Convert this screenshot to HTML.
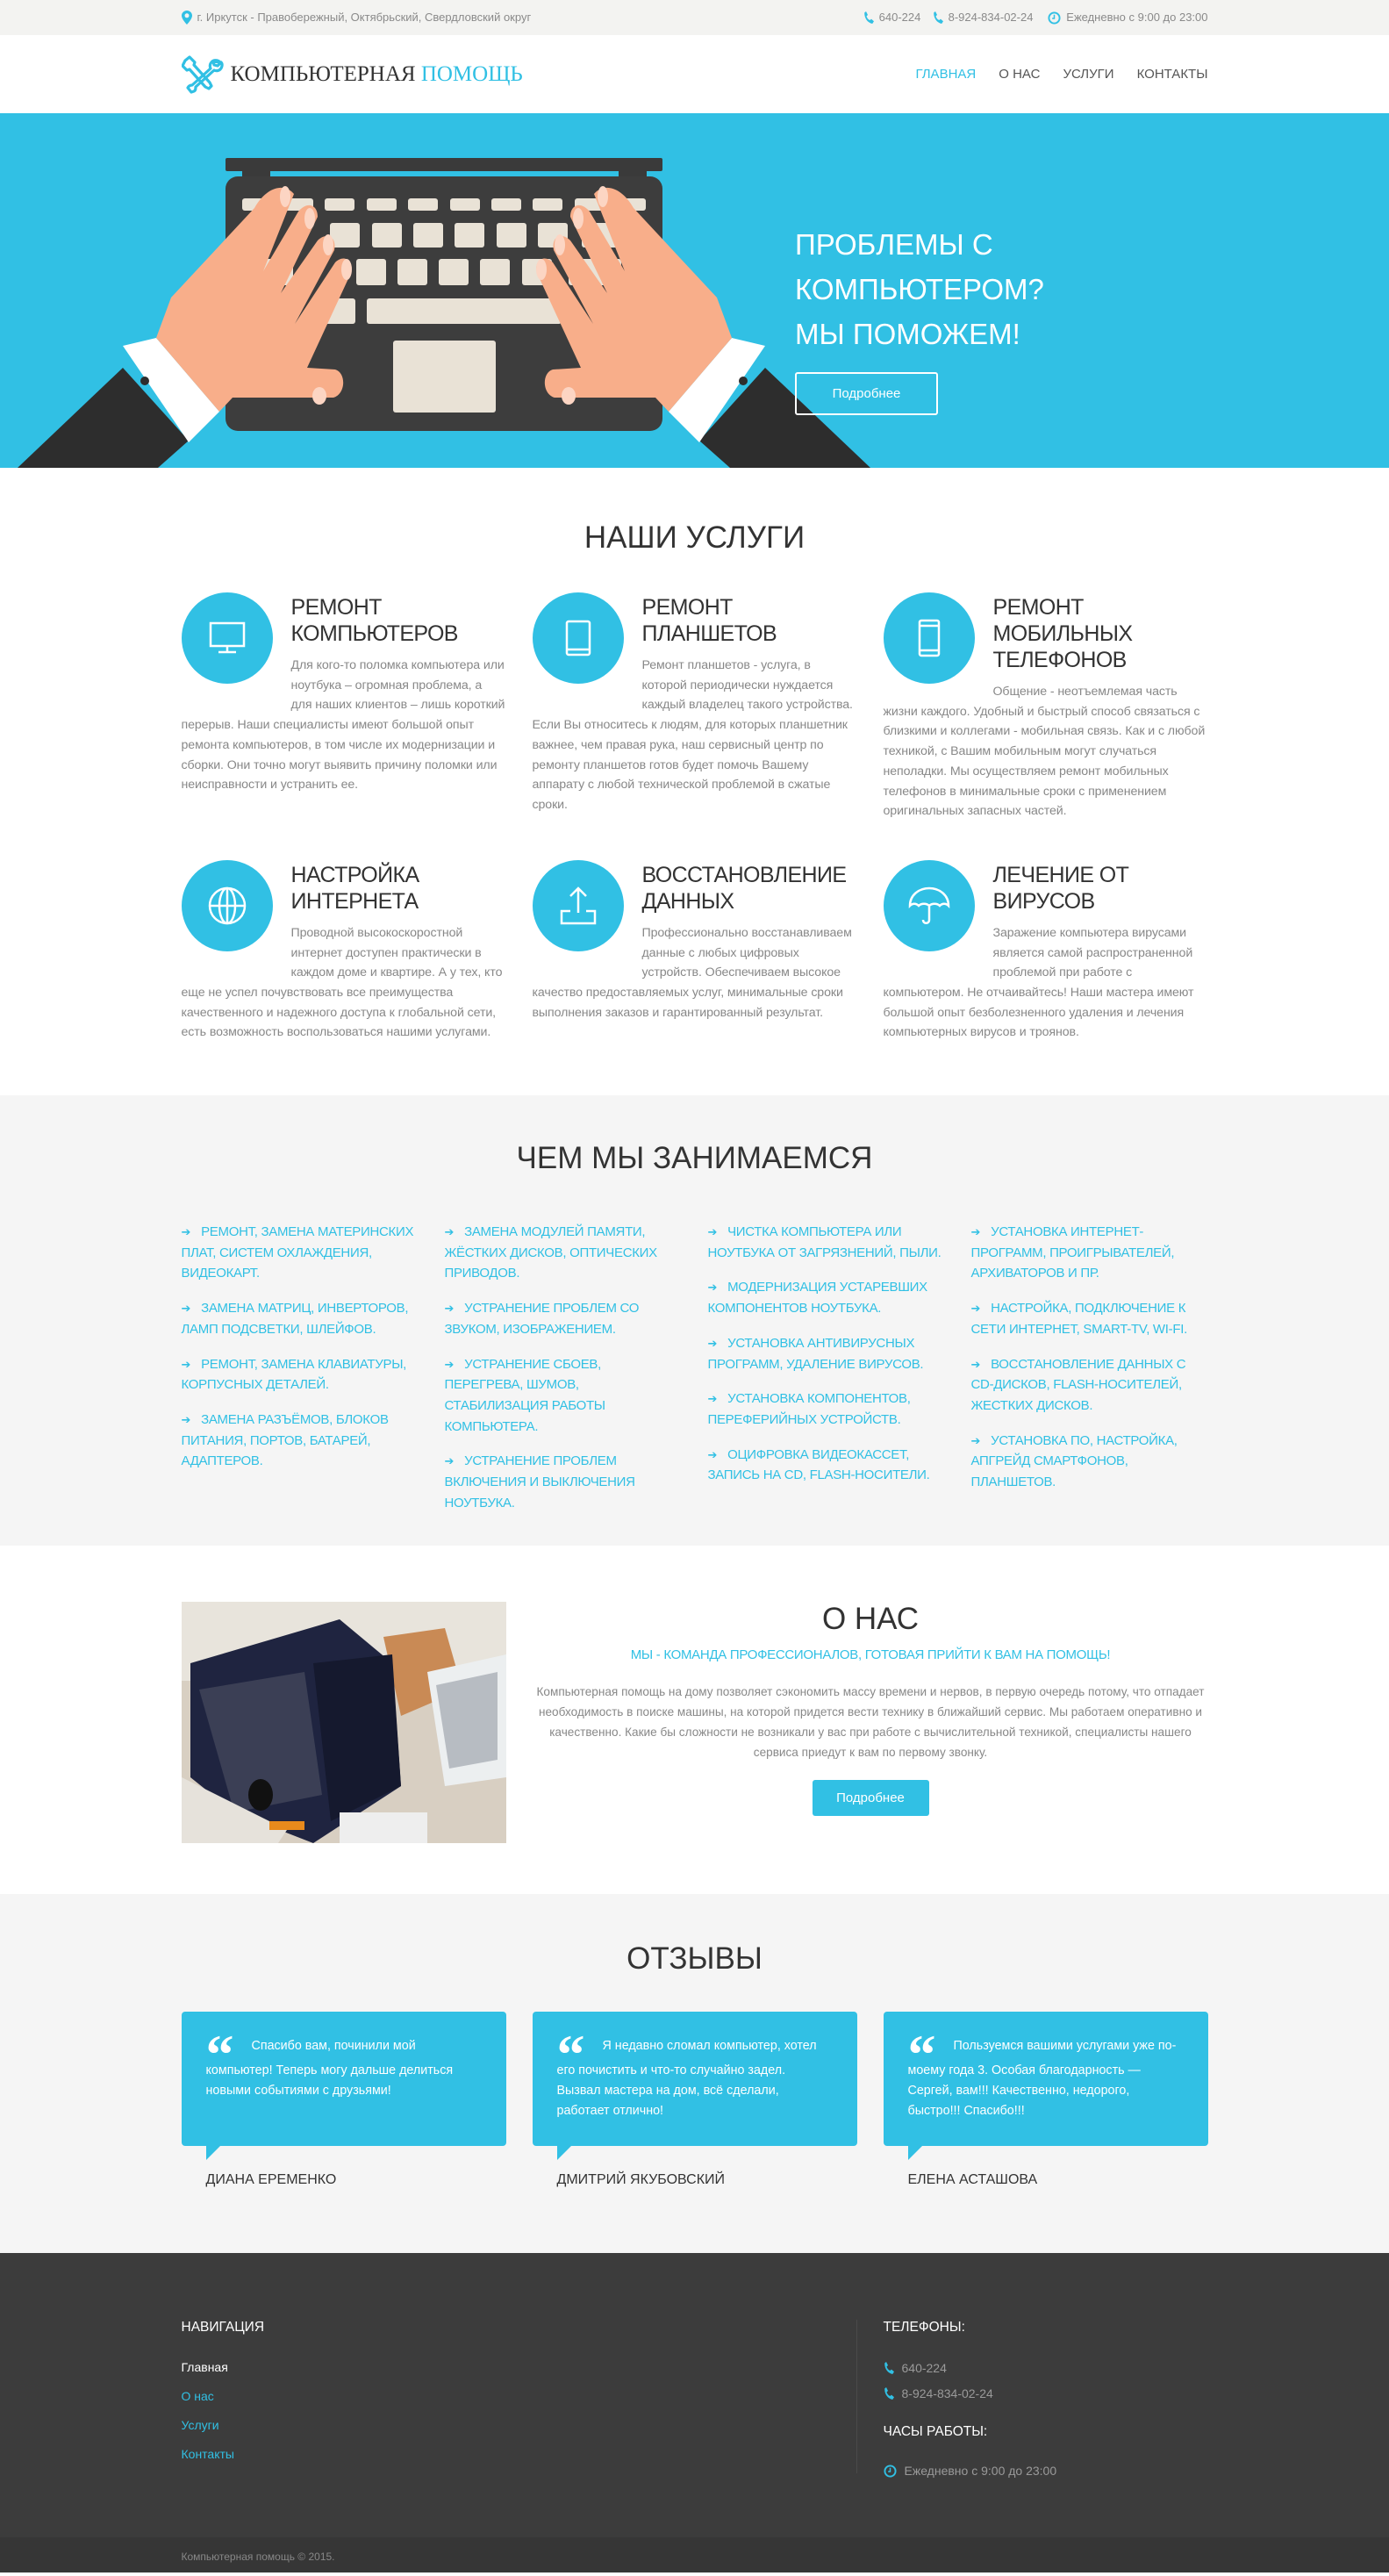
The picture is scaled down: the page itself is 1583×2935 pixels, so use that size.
<!DOCTYPE html>
<html><head><meta charset="utf-8"><style>
*{box-sizing:border-box;margin:0;padding:0}
body{width:1583px;font-family:"Liberation Sans","DejaVu Sans",sans-serif;color:#333;background:#fff}
.c{width:1200px;margin:0 auto;padding:0 15px;position:relative}
.top{height:40px;background:#f3f3f1;font-size:13px;color:#8a8a8a;line-height:40px}
.top .c{display:flex;justify-content:space-between}
.top span{display:inline-flex;align-items:center;gap:6px}
.hdr{height:89px;background:#fff}
.hdr .c{display:flex;justify-content:space-between;align-items:center;height:89px}
.logo{display:flex;align-items:center;font-family:"Liberation Serif",serif;font-size:25px;color:#333;gap:8px}
.logo b{font-weight:normal;color:#31c0e4}
.nav a{font-size:15px;color:#555;text-decoration:none;margin-left:26px;text-transform:uppercase}
.nav a:first-child{color:#31c0e4}
.hero{height:404px;background:#31c0e4;position:relative;overflow:hidden}
.hero h1{position:absolute;left:906px;top:124px;font-weight:normal;color:#fff;font-size:33px;line-height:51px}
.hero .btn{position:absolute;left:906px;top:295px;width:163px;height:49px;border:2px solid #fff;border-radius:3px;color:#fff;font-size:15px;line-height:45px;text-align:center}
.h2{text-align:center;font-size:35px;font-weight:normal;color:#333}
.svc{height:715px;padding-top:60px;overflow:hidden}
.row{display:flex;margin:0 -15px}
.col3{width:400px;padding:0 15px}
.item .ic{float:left;width:104px;height:104px;border-radius:50%;background:#31c0e4;margin:0 21px 20px 0;display:flex;align-items:center;justify-content:center}
.item h3{font-weight:normal;font-size:25px;letter-spacing:-0.6px;line-height:30px;text-transform:uppercase;color:#333;padding-top:2px;margin-bottom:10px;white-space:nowrap}
.item p{font-size:14.2px;letter-spacing:-0.1px;line-height:22.7px;color:#888}
.gray{background:#f5f5f5}
.what{height:513px;padding-top:52px;overflow:hidden}
.list{display:flex;margin:52px -15px 0}
.list .col{width:300px;padding:0 15px}
.list p{color:#31c0e4;font-size:15px;letter-spacing:-0.3px;line-height:23.7px;text-transform:uppercase;margin-bottom:16px}
.list p:before{content:"\2794";margin-right:12px;font-size:13px}
.about{height:397px;padding-top:71px}
.about .img{width:370px;height:275px;float:left;position:relative;overflow:hidden;background:#c9b49a}
.about .txt{margin-left:401px;text-align:center}
.about .txt h2{font-weight:normal;font-size:35px;line-height:40px;margin-top:-7px}
.about .sub{color:#31c0e4;font-size:15px;letter-spacing:-0.3px;text-transform:uppercase;margin-top:12px}
.about .p{color:#888;font-size:13.6px;line-height:23px;margin-top:22px;padding:0 0}
.about .b2{display:inline-block;width:133px;height:41px;line-height:41px;background:#31c0e4;color:#fff;border-radius:3px;font-size:15px;margin-top:20px}
.rev{height:409px;padding-top:54px}
.cards{display:flex;margin:40px -15px 0}
.card{width:400px;padding:0 15px}
.bub{background:#31c0e4;border-radius:4px;height:153px;padding:28px 28px;position:relative;color:#fff;font-size:14.3px;line-height:23px}
.bub:after{content:"";position:absolute;left:28px;bottom:-16px;border-right:16px solid transparent;border-top:16px solid #31c0e4}
.q{display:inline-block;font-family:"Liberation Serif",serif;font-size:64px;line-height:30px;height:28px;vertical-align:top;margin-right:20px;font-weight:bold;position:relative;top:6px}
.name{margin:30px 0 0 28px;font-size:16px;text-transform:uppercase;color:#333}
.foot{background:#3c3c3c;height:324px;padding-top:76px}
.foot .c{display:flex}
.fl{width:770px;border-right:1px solid #4a4a4a;height:175px}
.fr{padding-left:30px}
.foot h4{font-weight:normal;color:#fff;font-size:15.5px;text-transform:uppercase}
.fl a{display:block;font-size:14px;color:#31c0e4;text-decoration:none;margin-top:15px;line-height:18px}
.fl a.w{color:#fff;margin-top:27px}
.fr div{color:#9a9a9a;font-size:14px;display:flex;align-items:center;gap:9px;line-height:18px}
.copy{background:#363636;height:40px;color:#888;font-size:12px;line-height:44px}
</style></head><body>
<div class="top"><div class="c">
<span><svg width="12" height="16" viewBox="0 0 12 16"><path d="M6 0C2.7 0 0 2.6 0 5.8 0 10 6 16 6 16s6-6 6-10.2C12 2.6 9.3 0 6 0zm0 8.3A2.5 2.5 0 1 1 6 3.3a2.5 2.5 0 0 1 0 5z" fill="#31c0e4"/></svg>г. Иркутск - Правобережный, Октябрьский, Свердловский округ</span>
<span><svg width="12" height="15" viewBox="0 0 12 15"><path d="M3 0l2 4-1.5 1.5c.6 2 2 3.7 3.8 4.5L9 8.6l3 2.6-1.8 2.8C5 13 1 8 1.2 1.5z" fill="#31c0e4"/></svg>640-224 &nbsp;<svg width="12" height="15" viewBox="0 0 12 15"><path d="M3 0l2 4-1.5 1.5c.6 2 2 3.7 3.8 4.5L9 8.6l3 2.6-1.8 2.8C5 13 1 8 1.2 1.5z" fill="#31c0e4"/></svg>8-924-834-02-24 &nbsp;&nbsp;<svg width="15" height="15" viewBox="0 0 16 16"><circle cx="8" cy="8" r="6.5" fill="none" stroke="#31c0e4" stroke-width="2"/><path d="M8 4v4.5h-2.5" fill="none" stroke="#31c0e4" stroke-width="1.6"/></svg>Ежедневно с 9:00 до 23:00</span>
</div></div>
<div class="hdr"><div class="c">
<div class="logo"><svg width="48" height="44" viewBox="0 0 48 44" fill="none" stroke="#31c0e4" stroke-width="3.2" stroke-linejoin="round"><path d="M4 6l5-4 6 6-1 3 18 20 2 4-3 3-4-2L9 16l-3 1-5-5z"/><path d="M44 8c-3-3-8-3-10 0-2 2-2 5-1 7L12 34c-2 0-4 1-5 3l4 5 3-1c2-1 2-3 2-5l21-19c2 1 5 1 7-1 2-2 3-6 1-8l-4 4-4-1-1-4z"/></svg><span>КОМПЬЮТЕРНАЯ <b>ПОМОЩЬ</b></span></div>
<div class="nav"><a>Главная</a><a>О нас</a><a>Услуги</a><a>Контакты</a></div>
</div></div>
<div class="hero">
<svg width="1583" height="404" style="position:absolute;left:0;top:0">
<rect x="257" y="51" width="498" height="15" rx="2" fill="#3a3a3a"/>
<rect x="276" y="64" width="32" height="14" fill="#3a3a3a"/><rect x="705" y="64" width="32" height="14" fill="#3a3a3a"/>
<rect x="257" y="72" width="498" height="290" rx="14" fill="#3d3d3d"/>
<g fill="#e9e2d6">
<rect x="276" y="97" width="34" height="14" rx="3"/><rect x="323" y="97" width="34" height="14" rx="3"/><rect x="370" y="97" width="34" height="14" rx="3"/><rect x="418" y="97" width="34" height="14" rx="3"/><rect x="465" y="97" width="34" height="14" rx="3"/><rect x="513" y="97" width="34" height="14" rx="3"/><rect x="560" y="97" width="34" height="14" rx="3"/><rect x="607" y="97" width="34" height="14" rx="3"/><rect x="655" y="97" width="34" height="14" rx="3"/><rect x="702" y="97" width="34" height="14" rx="3"/>
<rect x="276" y="125" width="34" height="28" rx="3"/><rect x="376" y="125" width="34" height="28" rx="3"/><rect x="424" y="125" width="34" height="28" rx="3"/><rect x="471" y="125" width="34" height="28" rx="3"/><rect x="518" y="125" width="34" height="28" rx="3"/><rect x="566" y="125" width="34" height="28" rx="3"/><rect x="613" y="125" width="34" height="28" rx="3"/><rect x="663" y="125" width="73" height="28" rx="3"/>
<rect x="300" y="166" width="34" height="30" rx="3"/><rect x="406" y="166" width="34" height="30" rx="3"/><rect x="453" y="166" width="34" height="30" rx="3"/><rect x="500" y="166" width="34" height="30" rx="3"/><rect x="547" y="166" width="34" height="30" rx="3"/><rect x="595" y="166" width="34" height="30" rx="3"/><rect x="648" y="166" width="60" height="30" rx="3"/>
<rect x="370" y="211" width="35" height="29" rx="3"/><rect x="418" y="211" width="222" height="29" rx="3"/>
<rect x="448" y="259" width="117" height="82" rx="3"/>
</g>
<g id="hand">
<polygon points="20,404 140,290 215,373 180,404" fill="#2d2d2d"/>
<polygon points="140,265 178,256 250,340 215,375" fill="#fff"/>
<circle cx="165" cy="305" r="5" fill="#2d2d2d"/>
<path d="M178,256 L195,210 L290,108 C305,82 325,80 335,92 L300,180 L340,112 C350,100 362,104 362,118 L320,205 L362,145 C372,135 384,140 381,156 L336,240 L382,170 C392,160 404,168 400,182 L350,290 L382,292 C395,296 394,320 380,324 L265,324 L250,340 Z" fill="#f8ae8a"/>
<ellipse cx="325" cy="95" rx="6" ry="12" fill="#fcd5c3"/><ellipse cx="353" cy="120" rx="6" ry="12" fill="#fcd5c3"/><ellipse cx="374" cy="150" rx="6" ry="12" fill="#fcd5c3"/><ellipse cx="395" cy="178" rx="6" ry="12" fill="#fcd5c3"/>
<ellipse cx="364" cy="322" rx="8" ry="10" fill="#fcd5c3"/>
</g>
<use href="#hand" transform="translate(1012,0) scale(-1,1)"/>
</svg>
<h1>ПРОБЛЕМЫ С<br>КОМПЬЮТЕРОМ?<br>МЫ ПОМОЖЕМ!</h1>
<div class="btn">Подробнее</div>
</div>

<div class="svc"><div class="c">
<h2 class="h2">НАШИ УСЛУГИ</h2>
<div class="row" style="margin-top:42px">
<div class="col3 item"><div class="ic"><svg width="44" height="40" viewBox="0 0 44 40" fill="none" stroke="#fff" stroke-width="2.5"><rect x="3" y="3" width="38" height="26"/><path d="M22 29v6M12 36h20"/></svg></div><h3>Ремонт<br>компьютеров</h3><p>Для кого-то поломка компьютера или ноутбука – огромная проблема, а для наших клиентов – лишь короткий перерыв. Наши специалисты имеют большой опыт ремонта компьютеров, в том числе их модернизации и сборки. Они точно могут выявить причину поломки или неисправности и устранить ее.</p></div>
<div class="col3 item"><div class="ic"><svg width="32" height="44" viewBox="0 0 32 44" fill="none" stroke="#fff" stroke-width="2.5"><rect x="3" y="3" width="26" height="38" rx="2"/><path d="M3 35h26"/></svg></div><h3>Ремонт<br>планшетов</h3><p>Ремонт планшетов - услуга, в которой периодически нуждается каждый владелец такого устройства. Если Вы относитесь к людям, для которых планшетник важнее, чем правая рука, наш сервисный центр по ремонту планшетов готов будет помочь Вашему аппарату с любой технической проблемой в сжатые сроки.</p></div>
<div class="col3 item"><div class="ic"><svg width="28" height="46" viewBox="0 0 28 46" fill="none" stroke="#fff" stroke-width="2.5"><rect x="3" y="3" width="22" height="40" rx="2"/><path d="M3 9h22M3 37h22"/></svg></div><h3>Ремонт<br>мобильных<br>телефонов</h3><p>Общение - неотъемлемая часть жизни каждого. Удобный и быстрый способ связаться с близкими и коллегами - мобильная связь. Как и с любой техникой, с Вашим мобильным могут случаться неполадки. Мы осуществляем ремонт мобильных телефонов в минимальные сроки с применением оригинальных запасных частей.</p></div>
</div>
<div class="row" style="margin-top:44px">
<div class="col3 item"><div class="ic"><svg width="48" height="48" viewBox="0 0 48 48" fill="none" stroke="#fff" stroke-width="2.5"><circle cx="24" cy="24" r="20"/><ellipse cx="24" cy="24" rx="9" ry="20"/><path d="M4 24h40M24 4v40"/></svg></div><h3>Настройка<br>интернета</h3><p>Проводной высокоскоростной интернет доступен практически в каждом доме и квартире. А у тех, кто еще не успел почувствовать все преимущества качественного и надежного доступа к глобальной сети, есть возможность воспользоваться нашими услугами.</p></div>
<div class="col3 item"><div class="ic"><svg width="46" height="48" viewBox="0 0 46 48" fill="none" stroke="#fff" stroke-width="2.5"><path d="M23 32V4M14 13l9-9 9 9M14 30H4v14h38V30H32"/></svg></div><h3>Восстановление<br>данных</h3><p>Профессионально восстанавливаем данные с любых цифровых устройств. Обеспечиваем высокое качество предоставляемых услуг, минимальные сроки выполнения заказов и гарантированный результат.</p></div>
<div class="col3 item"><div class="ic"><svg width="50" height="48" viewBox="0 0 50 48" fill="none" stroke="#fff" stroke-width="2.5"><path d="M3 24C3 12 13 4 25 4s22 8 22 20c-3-3-7-3-10 0-3-3-9-3-12 0-3-3-9-3-12 0-3-3-7-3-10 0zM25 24v16c0 5-7 5-7 0"/></svg></div><h3>Лечение от<br>вирусов</h3><p>Заражение компьютера вирусами является самой распространенной проблемой при работе с компьютером. Не отчаивайтесь! Наши мастера имеют большой опыт безболезненного удаления и лечения компьютерных вирусов и троянов.</p></div>
</div>
</div></div>

<div class="gray what"><div class="c">
<h2 class="h2">ЧЕМ МЫ ЗАНИМАЕМСЯ</h2>
<div class="list">
<div class="col"><p>Ремонт, замена материнских плат, систем охлаждения, видеокарт.</p><p>Замена матриц, инверторов, ламп подсветки, шлейфов.</p><p>Ремонт, замена клавиатуры, корпусных деталей.</p><p>Замена разъёмов, блоков питания, портов, батарей, адаптеров.</p></div>
<div class="col"><p>Замена модулей памяти, жёстких дисков, оптических приводов.</p><p>Устранение проблем со звуком, изображением.</p><p>Устранение сбоев, перегрева, шумов, стабилизация работы компьютера.</p><p>Устранение проблем включения и выключения ноутбука.</p></div>
<div class="col"><p>Чистка компьютера или ноутбука от загрязнений, пыли.</p><p>Модернизация устаревших компонентов ноутбука.</p><p>Установка антивирусных программ, удаление вирусов.</p><p>Установка компонентов, переферийных устройств.</p><p>Оцифровка видеокассет, запись на CD, flash-носители.</p></div>
<div class="col"><p>Установка интернет-программ, проигрывателей, архиваторов и пр.</p><p>Настройка, подключение к сети интернет, Smart-TV, Wi-Fi.</p><p>Восстановление данных с CD-дисков, flash-носителей, жестких дисков.</p><p>Установка ПО, настройка, апгрейд смартфонов, планшетов.</p></div>
</div>
</div></div>

<div class="about"><div class="c">
<div class="img"><svg width="370" height="275" viewBox="0 0 370 275">
<rect width="370" height="275" fill="#d8cfc2"/>
<rect x="0" y="0" width="370" height="90" fill="#e8e4dc"/>
<polygon points="230,40 300,30 320,100 250,130" fill="#c98a55"/>
<polygon points="280,80 370,60 370,200 300,210" fill="#eceff0"/>
<polygon points="290,95 360,80 360,180 305,190" fill="#b7bcc2"/>
<polygon points="10,70 180,20 240,70 250,210 150,275 60,240 10,200" fill="#1f2440"/>
<polygon points="150,70 240,60 250,210 170,250" fill="#15192e"/>
<polygon points="20,100 140,80 160,220 60,240" fill="#3b3f55"/>
<polygon points="0,200 120,260 110,275 0,275" fill="#e6e2db"/>
<ellipse cx="90" cy="220" rx="14" ry="18" fill="#111"/>
<rect x="180" y="240" width="100" height="35" fill="#eee"/>
<rect x="100" y="250" width="40" height="10" fill="#e88a1c"/>
</svg></div>
<div class="txt">
<h2>О НАС</h2>
<div class="sub">Мы - команда профессионалов, готовая прийти к вам на помощь!</div>
<div class="p">Компьютерная помощь на дому позволяет сэкономить массу времени и нервов, в первую очередь потому, что отпадает необходимость в поиске машины, на которой придется вести технику в ближайший сервис. Мы работаем оперативно и качественно. Какие бы сложности не возникали у вас при работе с вычислительной техникой, специалисты нашего сервиса приедут к вам по первому звонку.</div>
<div class="b2">Подробнее</div>
</div>
</div></div>

<div class="gray rev"><div class="c">
<h2 class="h2">ОТЗЫВЫ</h2>
<div class="cards">
<div class="card"><div class="bub"><span class="q">“</span>Спасибо вам, починили мой компьютер! Теперь могу дальше делиться новыми событиями с друзьями!</div><div class="name">Диана Еременко</div></div>
<div class="card"><div class="bub"><span class="q">“</span>Я недавно сломал компьютер, хотел его почистить и что-то случайно задел. Вызвал мастера на дом, всё сделали, работает отлично!</div><div class="name">Дмитрий Якубовский</div></div>
<div class="card"><div class="bub"><span class="q">“</span>Пользуемся вашими услугами уже по-моему года 3. Особая благодарность — Сергей, вам!!! Качественно, недорого, быстро!!! Спасибо!!!</div><div class="name">Елена Асташова</div></div>
</div>
</div></div>

<div class="foot"><div class="c">
<div class="fl"><h4>Навигация</h4><a class="w">Главная</a><a>О нас</a><a>Услуги</a><a>Контакты</a></div>
<div class="fr"><h4>Телефоны:</h4>
<div style="margin-top:28px"><svg width="12" height="15" viewBox="0 0 12 15"><path d="M3 0l2 4-1.5 1.5c.6 2 2 3.7 3.8 4.5L9 8.6l3 2.6-1.8 2.8C5 13 1 8 1.2 1.5z" fill="#31c0e4"/></svg>640-224</div>
<div style="margin-top:11px"><svg width="12" height="15" viewBox="0 0 12 15"><path d="M3 0l2 4-1.5 1.5c.6 2 2 3.7 3.8 4.5L9 8.6l3 2.6-1.8 2.8C5 13 1 8 1.2 1.5z" fill="#31c0e4"/></svg>8-924-834-02-24</div>
<h4 style="margin-top:26px">Часы работы:</h4>
<div style="margin-top:26px"><svg width="15" height="15" viewBox="0 0 16 16"><circle cx="8" cy="8" r="6.5" fill="none" stroke="#31c0e4" stroke-width="2"/><path d="M8 4v4.5h-2.5" fill="none" stroke="#31c0e4" stroke-width="1.6"/></svg>Ежедневно с 9:00 до 23:00</div>
</div>
</div></div>
<div class="copy"><div class="c">Компьютерная помощь © 2015.</div></div>
</body></html>
